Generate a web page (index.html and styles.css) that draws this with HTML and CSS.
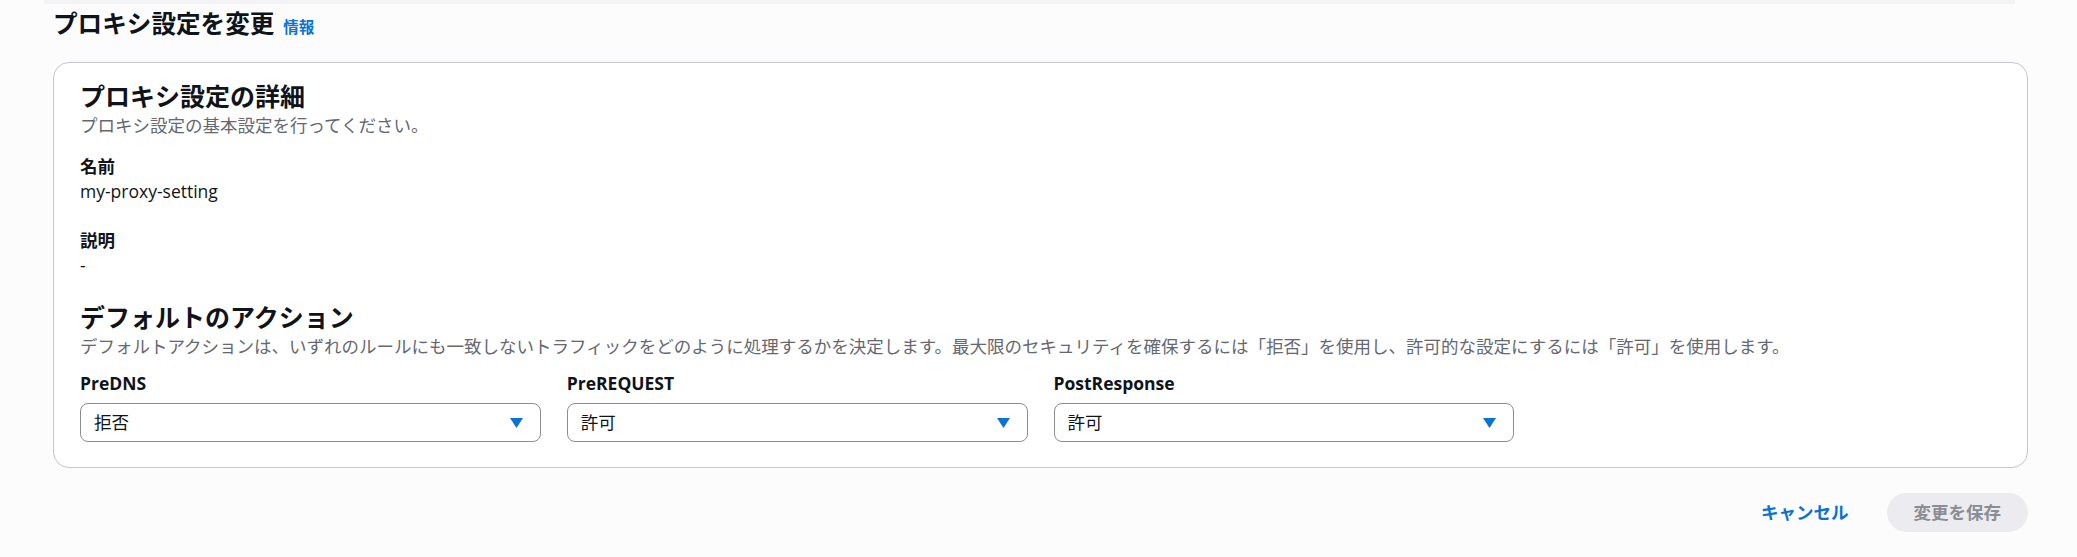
FILE: index.html
```html
<!DOCTYPE html>
<html lang="ja">
<head>
<meta charset="utf-8">
<title>プロキシ設定を変更</title>
<link rel="stylesheet" href="styles.css">
</head>
<body>
<div class="strip"></div>
<main class="page">
  <div class="page-header">
    <h1 class="page-title">プロキシ設定を変更</h1>
    <a class="info-link" href="#">情報</a>
  </div>
  <section class="card">
    <h2 class="card-title">プロキシ設定の詳細</h2>
    <p class="card-desc">プロキシ設定の基本設定を行ってください。</p>
    <div class="field field-first">
      <div class="field-label">名前</div>
      <div class="field-value">my-proxy-setting</div>
    </div>
    <div class="field field-second">
      <div class="field-label">説明</div>
      <div class="field-value">-</div>
    </div>
    <h2 class="card-title section-title">デフォルトのアクション</h2>
    <p class="card-desc">デフォルトアクションは、いずれのルールにも一致しないトラフィックをどのように処理するかを決定します。最大限のセキュリティを確保するには「拒否」を使用し、許可的な設定にするには「許可」を使用します。</p>
    <div class="select-grid">
      <div class="select-field">
        <div class="field-label">PreDNS</div>
        <div class="select">
          <span class="select-text">拒否</span>
          <svg class="caret" width="13" height="10" viewBox="0 0 13 10"><polygon points="0,0 13,0 6.5,10"/></svg>
        </div>
      </div>
      <div class="select-field">
        <div class="field-label">PreREQUEST</div>
        <div class="select">
          <span class="select-text">許可</span>
          <svg class="caret" width="13" height="10" viewBox="0 0 13 10"><polygon points="0,0 13,0 6.5,10"/></svg>
        </div>
      </div>
      <div class="select-field">
        <div class="field-label">PostResponse</div>
        <div class="select">
          <span class="select-text">許可</span>
          <svg class="caret" width="13" height="10" viewBox="0 0 13 10"><polygon points="0,0 13,0 6.5,10"/></svg>
        </div>
      </div>
    </div>
  </section>
  <div class="actions">
    <button class="btn-link" type="button">キャンセル</button>
    <button class="btn-primary" type="button" disabled>変更を保存</button>
  </div>
</main>
</body>
</html>
```

FILE: styles.css
```css
* {
  box-sizing: border-box;
}

html, body {
  margin: 0;
  padding: 0;
}

body {
  background: #fcfcfd;
  font-family: "Open Sans", "Noto Sans CJK JP", sans-serif;
  font-size: 17.5px;
  line-height: 25px;
  color: #0f141a;
}

.strip {
  height: 4px;
  margin-left: 44px;
  width: 1971px;
  background: #f3f3f5;
}

.page {
  padding: 0 49px 0 53px;
}

.page-header {
  display: flex;
  align-items: baseline;
  gap: 9px;
  margin-top: 5px;
}

.page-title {
  margin: 0;
  font-size: 24.6px;
  line-height: 30px;
  font-weight: 700;
}

.info-link {
  font-size: 15.5px;
  font-weight: 700;
  color: #0972d3;
  text-decoration: none;
}

.card {
  margin-top: 22px;
  background: #ffffff;
  border: 1px solid #c6c6cd;
  border-radius: 16px;
  padding: 18px 26px 25px;
}

.card-title {
  margin: 0;
  font-size: 25px;
  line-height: 30px;
  font-weight: 700;
}

.section-title {
  margin-top: 24px;
}

.card-desc {
  margin: 2px 0 0;
  color: #656871;
}

.field-first {
  margin-top: 16px;
}

.field-second {
  margin-top: 24px;
}

.field-label {
  font-weight: 700;
}

.select-grid {
  display: grid;
  grid-template-columns: repeat(4, 1fr);
  column-gap: 26px;
  margin-top: 12px;
}

.select {
  margin-top: 7px;
  height: 39px;
  border: 1px solid #8c8c94;
  border-radius: 8px;
  background: #ffffff;
  display: flex;
  align-items: center;
  justify-content: space-between;
  padding: 0 17px 0 13px;
}

.caret {
  fill: #0972d3;
  display: block;
}

.actions {
  display: flex;
  justify-content: flex-end;
  align-items: center;
  gap: 18px;
  margin-top: 25px;
}

.btn-link {
  background: none;
  border: none;
  padding: 0 20px;
  font-family: inherit;
  font-size: 17.5px;
  line-height: 25px;
  font-weight: 700;
  color: #0972d3;
}

.btn-primary {
  height: 39px;
  padding: 0 27px;
  border: none;
  border-radius: 20px;
  background: #ebebf0;
  color: #8c8c94;
  font-family: inherit;
  font-size: 17.5px;
  line-height: 25px;
  font-weight: 700;
}
```
